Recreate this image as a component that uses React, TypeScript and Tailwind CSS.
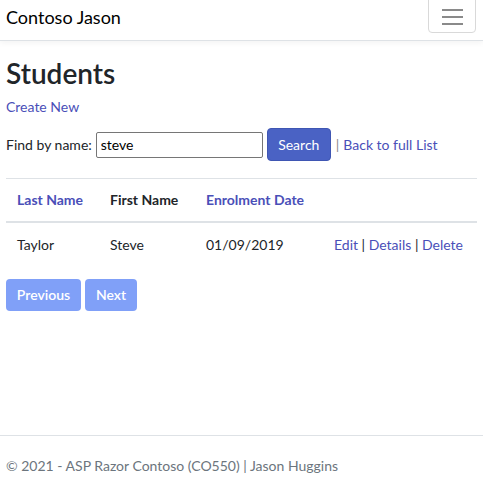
export default function App() {
  const font = { fontFamily: '"Lato", "Liberation Sans", sans-serif' };
  return (
    <div
      className="min-h-screen flex flex-col bg-white text-[14px] text-[#212529] font-['Lato','Liberation_Sans',sans-serif]"
      style={font}
    >
      <nav className="h-[41px] flex justify-between border-b border-[#dee2e6] shadow-[0_2px_6px_rgba(0,0,0,0.05)] px-1.5">
        <a className="text-[18px] leading-[24px] pt-[5px] text-black">Contoso Jason</a>
        <button className="-mt-[6px] mr-[1px] w-[48px] h-[39px] border border-[#d9d9d9] rounded-[4px] flex flex-col items-center justify-center gap-[5px] pt-[6px]">
          <span className="block w-[21px] h-[2px] bg-[#8a8a8a]" />
          <span className="block w-[21px] h-[2px] bg-[#8a8a8a]" />
          <span className="block w-[21px] h-[2px] bg-[#8a8a8a]" />
        </button>
      </nav>

      <main className="flex-1 px-1.5 pt-[15px]">
        <h1 className="text-[28px] leading-[34px] font-semibold text-[#212529]">Students</h1>
        <a className="block mt-[7px] text-[#4a4fb8] leading-[20px]">Create New</a>

        <form className="mt-[11px] flex items-center">
          <span className="mr-[4px]">Find by name:</span>
          <input
            readOnly
            value="steve"
            className="w-[167px] h-[26px] border border-[#767676] rounded-[2px] px-[4px] text-[14px] text-black"
            style={font}
          />
          <button
            type="button"
            className="ml-[4px] w-[64px] h-[33px] rounded-[4px] bg-[#4a62c4] text-white text-[14px] border border-[#3f56b3]"
            style={font}
          >
            Search
          </button>
          <span className="ml-[5px] text-[#8a8a8a]">|</span>
          <a className="ml-[4px] text-[#4a4fb8]">Back to full List</a>
        </form>

        <table className="mt-[17px] w-full border-collapse">
          <thead>
            <tr className="border-t border-[#dee2e6] border-b-2 border-b-[#dee2e6]">
              <th className="w-[93px] text-left font-bold px-[11px] h-[43px] text-[#4a4fb8]">Last Name</th>
              <th className="w-[96px] text-left font-bold px-[11px] text-[#212529]">First Name</th>
              <th className="w-[128px] text-left font-bold px-[11px] text-[#4a4fb8]">Enrolment Date</th>
              <th className="px-[11px]"></th>
            </tr>
          </thead>
          <tbody>
            <tr>
              <td className="px-[11px] h-[44px]">Taylor</td>
              <td className="px-[11px]">Steve</td>
              <td className="px-[11px]">01/09/2019</td>
              <td className="px-[11px] whitespace-nowrap">
                <a className="text-[#4a4fb8]">Edit</a> | <a className="text-[#4a4fb8]">Details</a> |{" "}
                <a className="text-[#4a4fb8]">Delete</a>
              </td>
            </tr>
          </tbody>
        </table>

        <div className="mt-[13px] flex gap-[4px]">
          <button className="w-[75px] h-[32px] rounded-[4px] bg-[#80a0f8] text-white font-semibold" style={font}>
            Previous
          </button>
          <button className="w-[52px] h-[32px] rounded-[4px] bg-[#80a0f8] text-white font-semibold" style={font}>
            Next
          </button>
        </div>
      </main>

      <footer className="h-[48px] border-t border-[#dee2e6] px-1.5 pt-[20px] text-[#6c757d] leading-[20px]">
        © 2021 - ASP Razor Contoso (CO550) | Jason Huggins
      </footer>
    </div>
  );
}
